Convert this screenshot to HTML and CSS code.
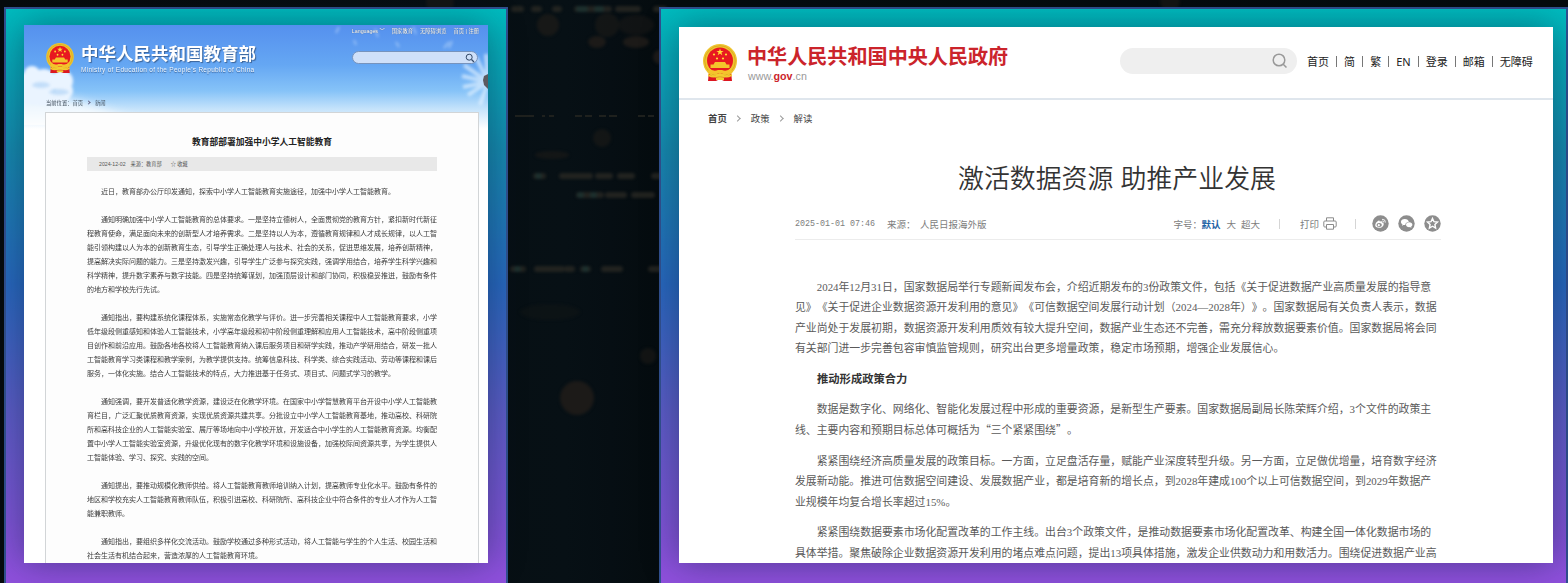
FILE: index.html
```html
<!DOCTYPE html>
<html lang="zh-CN">
<head>
<meta charset="utf-8">
<title>政策文件</title>
<link rel="stylesheet" href="styles.css">
</head>
<body>
<svg class="bokeh" width="1568" height="583" viewBox="0 0 1568 583" aria-hidden="true">
  <defs><filter id="soft" x="-20%" y="-50%" width="140%" height="200%" color-interpolation-filters="sRGB"><feGaussianBlur stdDeviation="1.8"/></filter></defs>
  <g filter="url(#soft)" fill="#1c1a18">
    <circle cx="548" cy="25" r="11" opacity=".8"/><circle cx="607" cy="25" r="12" opacity=".6"/><ellipse cx="636" cy="25" rx="18" ry="10" opacity=".5"/>
    <ellipse cx="597" cy="42" rx="9" ry="6"/><ellipse cx="636" cy="42" rx="13" ry="6"/><circle cx="660" cy="57" r="7"/>
    <circle cx="602" cy="138" r="9" opacity=".6"/><ellipse cx="552" cy="155" rx="17" ry="4" opacity=".6"/>
    <circle cx="577" cy="398" r="17"/><circle cx="648" cy="356" r="8" opacity=".6"/><ellipse cx="550" cy="312" rx="30" ry="8" opacity=".25"/>
    <circle cx="1170" cy="1" r="10" opacity=".6"/><circle cx="440" cy="1" r="14" opacity=".6"/>
  </g>
  <g filter="url(#soft)" stroke="#272723" stroke-width="6" stroke-linecap="round">
    <path d="M514 9h7M534 9h5M555 9h4M577 9h32M618 9h20M656 9h8M536 176h7M562 176h28M598 176h12M620 176h12M654 176h6M579 195h22M608 195h16M634 195h18M513 269h10M537 269h25M567 269h5M583 269h5M604 269h16M651 269h9" opacity=".85"/>
    <path d="M579 9h6M597 9h4M538 176h1M593 195h1M580 195h1M517 269h1M585 269h1" stroke="#1c3534" opacity=".7"/>
  </g>
  <path d="M515 116h19M542 116h3M549 116h5M575 116h7M585 116h7M599 116h7M609 116h8M638 116h7M648 116h6" stroke="#1f211e" stroke-width="2"/>
</svg>
<svg class="symbols" width="0" height="0" aria-hidden="true">
  <symbol id="emblem" viewBox="0 0 34 37">
    <path d="M6 27L5 37h8l4-2 4 2h8l-1-10z" fill="#dc1720"/>
    <circle cx="17" cy="17" r="17" fill="#efc52e"/>
    <circle cx="17" cy="17" r="15.3" fill="none" stroke="#d6a421" stroke-width=".8"/>
    <circle cx="17" cy="16.500" r="13" fill="#e81820"/>
    <path d="M17 4.500l.9 2.500h2.700l-2.200 1.600.9 2.600-2.300-1.600-2.300 1.600.9-2.600L13.400 7h2.700z" fill="#ffdc35"/>
    <g fill="#ffdc35"><circle cx="11" cy="10.500" r="1.100"/><circle cx="14" cy="14.500" r="1.100"/><circle cx="20" cy="14.500" r="1.100"/><circle cx="23" cy="10.500" r="1.100"/></g>
    <path d="M12 18h10l1.500 2.500h3V24h-19v-3.500h3z" fill="#f4c42b"/>
    <path d="M6 24q4 4 9 2h4q5 2 9-2l1 4q-5 4-10 1h-4q-5 3-10-1z" fill="#f4c42b"/>
    <path d="M5 30q6 3 10 0l2-1 2 1q4 3 10 0v2q-6 3-10 0h-4q-4 3-10 0zM13 34h8v2h-8z" fill="#f4cc30"/>
  </symbol>
</svg>
<main class="stage">
  <section class="frame frame-edu">
    <article class="edu">
      <svg class="sky" width="464" height="100" viewBox="0 0 464 100" aria-hidden="true">
        <defs>
          <filter id="puff" x="-20%" y="-20%" width="140%" height="140%"><feGaussianBlur stdDeviation="1.500"/></filter>
          <filter id="haze" x="-20%" y="-50%" width="140%" height="200%"><feGaussianBlur stdDeviation="5"/></filter>
        </defs>
        <path d="M-20 66q60 3 100 18t90 16v20H-20z" fill="#fff" opacity=".75" filter="url(#haze)"/>
        <g filter="url(#puff)" fill="#eaf4ff">
          <circle cx="8" cy="49" r="8"/><circle cx="20" cy="57" r="13"/><circle cx="38" cy="56" r="11"/><circle cx="3" cy="62" r="14"/><circle cx="40" cy="66" r="9"/>
          <ellipse cx="20" cy="73" rx="26" ry="7"/>
        </g>
        <g filter="url(#puff)" fill="#a9cff5" opacity=".6"><ellipse cx="17" cy="60" rx="9" ry="3"/><ellipse cx="35" cy="67" rx="10" ry="3"/></g>
        <g filter="url(#puff)" fill="none" stroke="#e5f3ff" opacity=".65"><path d="M464 57l-24-17M464 57l-26-6M464 57l-25 5M464 57l-20 13M464 57l-12-25M464 57l-2-28M464 57l-8 23" stroke-width="4"/></g>
        <g filter="url(#puff)" fill="none" stroke="#e5f3ff" opacity=".4"><path d="M312 8l3-6M332 20l-2-5M354 12l-3-8M375 22l-3-5M392 9l-3-7M420 23l5-6M425 23l3-7" stroke-width="2"/></g>
        <path d="M464 49l-4 2-1 4 1 5 4 4z" fill="#5c5a60"/>
      </svg>
      <header class="edu-head">
        <div class="edu-brand">
          <svg class="edu-emblem" width="28" height="30"><use href="#emblem"/></svg>
          <div class="edu-names">
            <h1>中华人民共和国教育部</h1>
            <p>Ministry of Education of the People's Republic of China</p>
          </div>
        </div>
        <div class="edu-tools">
          <nav><span>Languages ﹀</span><span>国家教育</span><span>无障碍浏览</span><span>首页 | 注册</span></nav>
          <div class="edu-search"><svg width="10" height="10" viewBox="0 0 10 10"><circle cx="4.200" cy="4.200" r="3" fill="none" stroke="#344a68"/><path d="M6.500 6.500L9 9" stroke="#344a68" stroke-width="1.200"/></svg></div>
        </div>
      </header>
      <div class="edu-crumb">当前位置：首页 <i></i> 新闻</div>
      <div class="edu-paper">
        <h2>教育部部署加强中小学人工智能教育</h2>
        <div class="edu-meta"><span>2024-12-02</span><span>来源：教育部</span><span class="fav">☆ 收藏</span></div>
        <div class="edu-text">
          <p><span>近日，教育部办公厅印发通知，探索中小学人工智能教育实施途径，加强中小学人工智能教育。</span></p>
          <p><span>通知明确加强中小学人工智能教育的总体要求。一是坚持立德树人，全面贯彻党的教育方针，紧扣新时代新征</span><span>程教育使命，满足面向未来的创新型人才培养需求。二是坚持以人为本，遵循教育规律和人才成长规律，以人工智</span><span>能引领构建以人为本的创新教育生态，引导学生正确处理人与技术、社会的关系，促进思维发展，培养创新精神，</span><span>提高解决实际问题的能力。三是坚持激发兴趣，引导学生广泛参与探究实践，强调学用结合，培养学生科学兴趣和</span><span>科学精神，提升数字素养与数字技能。四是坚持统筹谋划，加强顶层设计和部门协同，积极稳妥推进，鼓励有条件</span><span>的地方和学校先行先试。</span></p>
          <p><span>通知指出，要构建系统化课程体系，实施常态化教学与评价。进一步完善相关课程中人工智能教育要求，小学</span><span>低年级段侧重感知和体验人工智能技术，小学高年级段和初中阶段侧重理解和应用人工智能技术，高中阶段侧重项</span><span>目创作和前沿应用。鼓励各地各校将人工智能教育纳入课后服务项目和研学实践，推动产学研用结合，研发一批人</span><span>工智能教育学习类课程和教学案例，为教学提供支持。统筹信息科技、科学类、综合实践活动、劳动等课程和课后</span><span>服务，一体化实施。结合人工智能技术的特点，大力推进基于任务式、项目式、问题式学习的教学。</span></p>
          <p><span>通知强调，要开发普适化教学资源，建设泛在化教学环境。在国家中小学智慧教育平台开设中小学人工智能教</span><span>育栏目，广泛汇聚优质教育资源，实现优质资源共建共享。分批设立中小学人工智能教育基地，推动高校、科研院</span><span>所和高科技企业的人工智能实验室、展厅等场地向中小学校开放，开发适合中小学生的人工智能教育资源。均衡配</span><span>置中小学人工智能实验室资源，升级优化现有的数字化教学环境和设施设备，加强校际间资源共享，为学生提供人</span><span>工智能体验、学习、探究、实践的空间。</span></p>
          <p><span>通知提出，要推动规模化教师供给。将人工智能教育教师培训纳入计划，提高教师专业化水平。鼓励有条件的</span><span>地区和学校充实人工智能教育教师队伍，积极引进高校、科研院所、高科技企业中符合条件的专业人才作为人工智</span><span>能兼职教师。</span></p>
          <p><span>通知指出，要组织多样化交流活动。鼓励学校通过多种形式活动，将人工智能与学生的个人生活、校园生活和</span><span>社会生活有机结合起来，营造浓厚的人工智能教育环境。</span></p>
        </div>
      </div>
    </article>
  </section>

  <section class="frame frame-gov">
    <article class="gov">
      <header class="gov-head">
        <svg class="gov-emblem" width="34" height="37"><use href="#emblem"/></svg>
        <div class="gov-names"><h1>中华人民共和国中央人民政府</h1><p>www.<b>gov</b>.cn</p></div>
        <div class="gov-search"><svg width="16" height="16" viewBox="0 0 16 16" fill="none" stroke="#999" stroke-width="1.500"><circle cx="7" cy="7" r="5.800"/><path d="M11.200 11.200l3.300 3.300"/></svg></div>
        <nav class="gov-nav"><span>首页</span><i></i><span>简</span><i></i><span>繁</span><i></i><span>EN</span><i></i><span>登录</span><i></i><span>邮箱</span><i></i><span>无障碍</span></nav>
      </header>
      <div class="gov-crumb"><b>首页</b><i></i><span>政策</span><i></i><span>解读</span></div>
      <h2>激活数据资源 助推产业发展</h2>
      <div class="gov-meta">
        <span class="date">2025-01-01 07:46</span><span class="label">来源：</span><span>人民日报海外版</span>
        <div class="gov-tools">
          <span class="size">字号：</span><b>默认</b><span class="big">大</span><span>超大</span><i class="bar bar-a"></i><span>打印</span>
          <svg class="printer" width="14" height="13" viewBox="0 0 14 13" fill="none" stroke="#8b8b8b"><path d="M3.500 4V.8h7V4M3.500 10H1.800Q.8 10 .8 9V5q0-1 1-1h10.400q1 0 1 1v4q0 1-1 1h-1.700M3.500 7.500h7v4.700h-7z"/></svg>
          <i class="bar bar-b"></i>
          <svg class="share" width="17" height="17" viewBox="0 0 17 17"><circle cx="8.500" cy="8.500" r="8.200" fill="#8d8d8d"/><path d="M3.200 10q0-2.500 3-4.200 1.600-.8 1.500.8 2.600-1 2.600.8 1.900.5 1.400 2.300-.9 3.100-4.700 3.100T3.200 10z" fill="#fff"/><ellipse cx="7.200" cy="10" rx="2.700" ry="1.900" fill="#8d8d8d"/><circle cx="6.800" cy="10.200" r="1.100" fill="#fff"/><path d="M10 4.300q3.500-.3 3.400 3.200M10.300 6q1.600 0 1.500 1.500" fill="none" stroke="#fff" stroke-width=".9"/></svg>
          <svg class="share" width="17" height="17" viewBox="0 0 17 17"><circle cx="8.500" cy="8.500" r="8.200" fill="#8d8d8d"/><path d="M4 11l.5-1.600Q2.800 8.300 2.900 7q.2-3 3.900-3.100 3.500 0 4 3Q7.300 7.200 7.300 10q-1 .2-2-.1z" fill="#fff"/><path d="M13.500 13l-.4-1.200q1.400-1 1.300-2.100-.2-2.300-3.200-2.400-3.100.2-3.200 2.500.2 2.600 4 2.300z" fill="#fff"/></svg>
          <svg class="share" width="17" height="17" viewBox="0 0 17 17"><circle cx="8.500" cy="8.500" r="8.200" fill="#8d8d8d"/><path d="M8.500 3.500l1.500 3.200 3.500.4-2.600 2.400.7 3.500-3.100-1.800L5.400 13l.7-3.500-2.600-2.400 3.500-.4z" fill="none" stroke="#fff" stroke-width="1.400"/></svg>
        </div>
      </div>
      <div class="gov-text">
        <p><span>2024年12月31日，国家数据局举行专题新闻发布会，介绍近期发布的3份政策文件，包括《关于促进数据产业高质量发展的指导意</span><span>见》《关于促进企业数据资源开发利用的意见》《可信数据空间发展行动计划（2024—2028年）》。国家数据局有关负责人表示，数据</span><span>产业尚处于发展初期，数据资源开发利用质效有较大提升空间，数据产业生态还不完善，需充分释放数据要素价值。国家数据局将会同</span><span>有关部门进一步完善包容审慎监管规则，研究出台更多增量政策，稳定市场预期，增强企业发展信心。</span></p>
        <h3>推动形成政策合力</h3>
        <p><span>数据是数字化、网络化、智能化发展过程中形成的重要资源，是新型生产要素。国家数据局副局长陈荣辉介绍，3个文件的政策主</span><span>线、主要内容和预期目标总体可概括为<q>“</q>三个紧紧围绕<q>”</q>。</span></p>
        <p><span>紧紧围绕经济高质量发展的政策目标。一方面，立足盘活存量，赋能产业深度转型升级。另一方面，立足做优增量，培育数字经济</span><span>发展新动能。推进可信数据空间建设、发展数据产业，都是培育新的增长点，到2028年建成100个以上可信数据空间，到2029年数据产</span><span>业规模年均复合增长率超过15%。</span></p>
        <p><span>紧紧围绕数据要素市场化配置改革的工作主线。出台3个政策文件，是推动数据要素市场化配置改革、构建全国一体化数据市场的</span><span>具体举措。聚焦破除企业数据资源开发利用的堵点难点问题，提出13项具体措施，激发企业供数动力和用数活力。围绕促进数据产业高</span></p>
      </div>
    </article>
  </section>
</main>
</body>
</html>
```
FILE: styles.css
```css
* { box-sizing: border-box; }
body {
  margin: 0;
  width: 1568px;
  height: 583px;
  overflow: hidden;
  background: linear-gradient(90deg, #060b0d 0, #071015 36%, #060e13 39%, #050c0f 42%, #050b0d);
  font-family: "Liberation Sans", "Noto Sans CJK SC", sans-serif;
  text-spacing-trim: space-all;
  white-space: nowrap;
}
h1, h2, h3, p { margin: 0; }
i { font-style: normal; }
q { quotes: none; font-family: "Noto Sans CJK SC", sans-serif; line-height: 1; }
q::before, q::after { content: none; }
.bokeh { position: absolute; left: 0; top: 0; }
.symbols { position: absolute; }
.stage {
  position: relative;
  display: flex;
  gap: 151px;
  height: 583px;
  padding: 7px 0 0 4px;
}
.frame {
  flex: none;
  height: 590px;
  border: 2px solid #31508f;
  background: linear-gradient(180deg, #00bcbf 0, #1689ae 24%, #2867bd 47%, #5a5cc5 68%, #8e50dc 97%);
}
.frame-edu { width: 504px; padding: 16px 18px; }
.frame-gov { width: 909px; padding: 18px 13px 18px 18px; }
.edu, .gov { overflow: hidden; box-shadow: 0 0 34px rgba(0, 20, 40, .4); }

.edu {
  position: relative;
  width: 464px;
  height: 538px;
  background: linear-gradient(180deg, #5590ee 0, #65a7f3 40px, #86c3f8 66px, #c5e3fb 84px, #fff 104px);
}
.sky { position: absolute; left: 0; top: 0; }
.edu-head { position: relative; display: flex; justify-content: space-between; height: 74px; padding: 0 9px 0 22px; }
.edu-brand { display: flex; gap: 7px; padding-top: 18px; }
.edu-names h1 {
  font-size: 17.500px;
  line-height: 22px;
  font-weight: 700;
  color: #fff;
  text-shadow: 1px 1px 1px #3c6498;
}
.edu-names p { font-size: 6.500px; line-height: 9px; color: #eef6ff; text-shadow: 0 1px 1px #335a90; letter-spacing: .28px; }
.edu-tools nav { display: flex; justify-content: flex-end; gap: 7px; padding-top: 2px; font-size: 5.300px; line-height: 8px; color: #fff; text-shadow: 0 0 1px #405060; }
.edu-search {
  display: flex;
  align-items: center;
  justify-content: flex-end;
  width: 126px;
  height: 13px;
  margin: 16px 0 0;
  padding-right: 2px;
  border: 1px solid #7693bd;
  border-radius: 7px;
  background: #cfe0f9;
}
.edu-crumb { position: relative; height: 13px; padding: 0 0 0 22px; font-size: 5.300px; line-height: 9px; color: #45525f; }
.edu-crumb i { display: inline-block; width: 3px; height: 3px; margin: 0 4px 1px 2px; border: solid #668; border-width: .5px .5px 0 0; transform: rotate(45deg); }
.edu-paper {
  position: relative;
  width: 434px;
  height: 460px;
  margin-left: 21px;
  padding: 20px 41px 0;
  border: 1px solid #d2d5d7;
  background: #fdfdfd;
}
.edu-paper h2 { font-size: 8.750px; line-height: 18px; text-align: center; color: #222; font-weight: 600; }
.edu-meta { display: flex; gap: 5px; height: 14px; margin-top: 6px; padding-left: 12px; background: #e8e8e8; font-size: 5.200px; line-height: 14px; color: #555; }
.edu-meta .fav { margin-left: 4px; }
.edu-text { padding-top: 14px; font-size: 7px; line-height: 14px; color: #3a3a3a; filter: blur(.3px); }
.edu-text p { margin-bottom: 14px; }
.edu-text p span, .gov-text p span { display: block; }
.edu-text p span:first-child, .gov-text p span:first-child { padding-left: 2em; }

.gov { width: 874px; height: 536px; background: #fff; }
.gov-head { display: flex; height: 73px; padding: 17px 20px 0 24px; border-bottom: 2px solid #dfe6ed; }
.gov-names { width: 373px; margin-left: 10px; }
.gov-names h1 { font-size: 20.100px; line-height: 26px; color: #cb242b; font-weight: 700; }
.gov-names p { padding-left: 1px; font-size: 10.700px; line-height: 12px; color: #999; }
.gov-names b { color: #cb242b; }
.gov-search { display: flex; align-items: center; justify-content: flex-end; width: 177px; height: 26px; margin-top: 4px; padding-right: 9px; border-radius: 13px; background: #efefef; }
.gov-nav { display: flex; align-items: center; justify-content: space-between; width: 226px; height: 26px; margin: 4px 0 0 10px; font-family: "Noto Sans", "Noto Sans CJK SC", sans-serif; font-size: 11px; color: #222; }
.gov-nav i { width: 1px; height: 11px; background: #777; }
.gov-crumb { display: flex; align-items: center; height: 35px; padding: 1px 0 0 29px; font-size: 9.400px; color: #444; }
.gov-crumb i { width: 5px; height: 5px; margin: 0 11px 0 8px; border: solid #999; border-width: 1px 1px 0 0; transform: rotate(45deg) scale(.9); }
.gov h2 { height: 61px; padding: 16px 0 0 2px; font-size: 25.900px; line-height: 56px; text-align: center; font-weight: 350; color: #333; }
.gov-meta { display: flex; align-items: center; width: 646px; height: 32px; margin: 12px 0 0 116px; border-bottom: 1px solid #ececec; font-size: 9.500px; color: #7d7d7d; }
.gov-meta .date { width: 92px; font-family: "Liberation Mono", monospace; font-size: 8.350px; }
.gov-meta .label { width: 33px; }
.gov-tools { display: flex; align-items: center; margin-left: auto; }
.gov-tools .size { width: 28px; }
.gov-tools b { color: #1d62a5; }
.gov-tools .big { margin: 0 5px 0 6px; }
.bar { width: 1px; height: 10px; background: #d5d5d5; }
.bar-a { margin: 0 20px 0 19px; }
.bar-b { margin: 0 16px 0 18px; }
.printer { margin-left: 4px; }
.share + .share { margin-left: 9px; }
.gov-text { padding: 36.500px 0 0 116px; font-family: "Liberation Serif", "Noto Sans CJK SC", serif; font-size: 10.880px; line-height: 20.500px; color: #5a5a5a; }
.gov-text p { margin-bottom: 10.200px; }
.gov-text h3 { margin-bottom: 10.200px; padding-left: 22px; font-size: 11.300px; line-height: 20.500px; color: #333; }
```
